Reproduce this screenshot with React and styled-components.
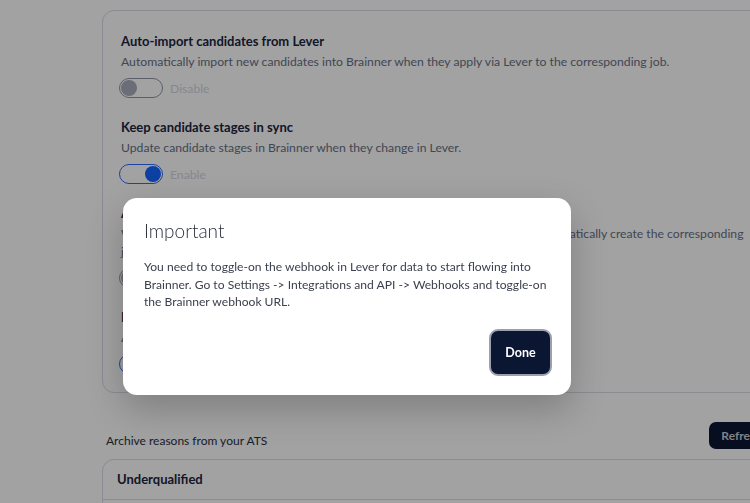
import React from 'react'
import styled, { createGlobalStyle } from 'styled-components'

const GlobalStyle = createGlobalStyle`
  html, body {
    margin: 0;
    padding: 0;
    background: #ffffff;
    overflow: hidden;
  }
  body {
    font-family: Lato, "Open Sans", sans-serif;
    color: #1f2940;
  }
`

const Page = styled.main`
  width: 700px;
  padding: 10px 0 0 102px;
`

const SettingsCard = styled.section`
  width: 668px;
  box-sizing: border-box;
  border: 1px solid #d9dce6;
  border-radius: 12px;
  padding: 21px 24px 18px 18px;
  display: flex;
  flex-direction: column;
  gap: 20px;
`

const Setting = styled.div`
  display: flex;
  flex-direction: column;
`

const SettingTitle = styled.h3`
  margin: 0;
  font-size: 13px;
  line-height: 18px;
  font-weight: 700;
  color: #1c2540;
`

const SettingDesc = styled.p`
  margin: 3px 0 0;
  font-size: 12.2px;
  line-height: 18px;
  color: #667085;
`

const ToggleRow = styled.label`
  margin: 7px 0 0 -2px;
  display: flex;
  align-items: center;
  gap: 7px;
  font-size: 12.2px;
  color: #d3d6de;
`

const Track = styled.span`
  width: 40px;
  height: 18px;
  border-radius: 12px;
  border: 1.5px solid ${p => (p.$on ? '#2f6bff' : '#8e95a7')};
  background: #fff;
  display: flex;
  align-items: center;
  justify-content: ${p => (p.$on ? 'flex-end' : 'flex-start')};
  padding: 0 1px;
`

const Knob = styled.span`
  width: 16px;
  height: 16px;
  border-radius: 50%;
  background: ${p => (p.$on ? '#1366ff' : '#a9adbb')};
`

const ArchiveHeader = styled.div`
  margin-top: 29px;
  display: flex;
  align-items: center;
  justify-content: space-between;
  padding-left: 4px;
  width: 668px;
`

const ArchiveLabel = styled.span`
  font-size: 12px;
  color: #2a3145;
  padding-top: 9px;
`

const DarkButton = styled.button`
  font-family: inherit;
  font-weight: 700;
  color: #fff;
  background: #0b1633;
  border: none;
  border-radius: 7px;
`

const RefreshButton = styled(DarkButton)`
  height: 27px;
  padding: 0 12px;
  font-size: 12px;
  color: #c8ccd6;
`

const ReasonCard = styled.div`
  margin-top: 10px;
  width: 668px;
  border: 1px solid #d9dce6;
  border-radius: 12px;
`

const ReasonRow = styled.div`
  padding: 11px 14px 12px;
  font-size: 13px;
  font-weight: 700;
  color: #1c2540;
  border-bottom: 1px solid #d9dce6;
`

const Overlay = styled.div`
  position: fixed;
  inset: 0;
  background: rgba(0, 0, 0, 0.365);
`

const Modal = styled.div`
  position: fixed;
  left: 123px;
  top: 198px;
  width: 448px;
  box-sizing: border-box;
  background: #fff;
  border-radius: 14px;
  padding: 20px 19px 19px 21px;
  box-shadow: 0 14px 36px rgba(0, 0, 0, 0.22);
  display: flex;
  flex-direction: column;
`

const ModalTitle = styled.h2`
  margin: 0;
  font-size: 19px;
  line-height: 26px;
  font-weight: 300;
  color: #2b2f3c;
`

const ModalBody = styled.p`
  margin: 14px 0 0;
  font-size: 12.1px;
  line-height: 17.5px;
  color: #3a3f4d;
`

const ModalFooter = styled.div`
  margin-top: 18px;
  display: flex;
  justify-content: flex-end;
`

const DoneButton = styled(DarkButton)`
  width: 63px;
  height: 47px;
  font-size: 12.5px;
  border: 2px solid #9ca0ab;
  border-radius: 9px;
  box-shadow: inset 0 0 0 1px #0b1633;
`

const settings = [
  {
    title: 'Auto-import candidates from Lever',
    desc: 'Automatically import new candidates into Brainner when they apply via Lever to the corresponding job.',
    on: false,
  },
  {
    title: 'Keep candidate stages in sync',
    desc: 'Update candidate stages in Brainner when they change in Lever.',
    on: true,
  },
  {
    title: 'Auto-create jobs from Lever',
    desc: 'When a new job posting is published in your own Lever account, Brainner will automatically create the corresponding job.',
    on: false,
  },
  {
    title: 'Include archived candidates',
    desc: 'Also import candidates that have been archived in Lever.',
    on: true,
  },
]

const Toggle = ({ on }) => (
  <ToggleRow>
    <Track $on={on}>
      <Knob $on={on} />
    </Track>
    {on ? 'Enable' : 'Disable'}
  </ToggleRow>
)

export default function App() {
  return (
    <>
      <GlobalStyle />
      <Page>
        <SettingsCard>
          {settings.map(s => (
            <Setting key={s.title}>
              <SettingTitle>{s.title}</SettingTitle>
              <SettingDesc>{s.desc}</SettingDesc>
              <Toggle on={s.on} />
            </Setting>
          ))}
        </SettingsCard>
        <ArchiveHeader>
          <ArchiveLabel>Archive reasons from your ATS</ArchiveLabel>
          <RefreshButton>Refresh</RefreshButton>
        </ArchiveHeader>
        <ReasonCard>
          <ReasonRow>Underqualified</ReasonRow>
          <ReasonRow>Overqualified</ReasonRow>
        </ReasonCard>
      </Page>
      <Overlay />
      <Modal>
        <ModalTitle>Important</ModalTitle>
        <ModalBody>
          You need to toggle-on the webhook in Lever for data to start flowing into
          Brainner. Go to Settings -&gt; Integrations and API -&gt; Webhooks and toggle-on
          the Brainner webhook URL.
        </ModalBody>
        <ModalFooter>
          <DoneButton>Done</DoneButton>
        </ModalFooter>
      </Modal>
    </>
  )
}
